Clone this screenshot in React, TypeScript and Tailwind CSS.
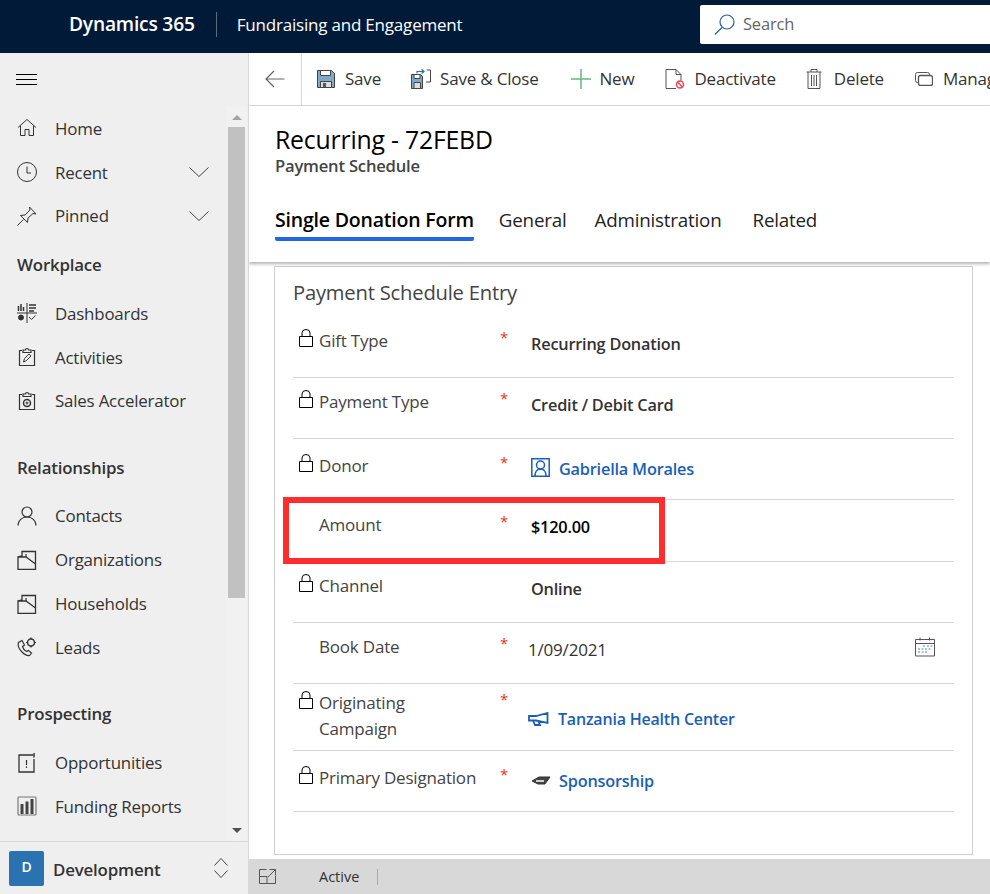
import React from "react";

const stroke = { fill: "none", stroke: "currentColor", strokeWidth: 1 };

const Ic = ({ children, className = "w-5 h-5" }: { children: React.ReactNode; className?: string }) => (
  <svg viewBox="0 0 20 20" className={className + " shrink-0"} {...stroke}>
    {children}
  </svg>
);

const navIcons: Record<string, React.ReactNode> = {
  home: <path d="M1 9.500 10 1.500l9 8M3.500 8v9.500h4.500v-6h4v6h4.500V8" />,
  clock: (
    <>
      <circle cx="10" cy="10" r="9.500" />
      <path d="M10 4.500V11h4" />
    </>
  ),
  pin: <path d="M.5 19.500 6.500 13.500M3.500 9.500l7 7 .5-4.500 5-4.500 3 .5-6.500-7 .5 3-5 5Z" />,
  dash: (
    <>
      <path d="M10 0v20M0 10h20" />
      <path d="M1.500 8V3M4 8V1M6.500 8V4M12 2h7M12 5h7M12 8h5" strokeWidth="1.500" />
      <circle cx="4" cy="14.500" r="2.500" fill="currentColor" />
      <path d="m12 14 2.500 2.500 4-4" />
    </>
  ),
  activity: (
    <>
      <path d="M5 3.500H2.500v15h15v-15H15M6 5.500V3h2.500a1.500 1.500 0 0 1 3 0H14v2.500Z" strokeWidth="1.200" />
      <path d="m6.500 15 1-3.500 4.500-4.500 2 2-4.500 4.500Z" />
    </>
  ),
  sales: (
    <>
      <path d="M5 3.500H2.500v15h15v-15H15M6 5.500V3h2.500a1.500 1.500 0 0 1 3 0H14v2.500Z" strokeWidth="1.200" />
      <circle cx="10" cy="12" r="3.500" strokeWidth="1.500" />
      <circle cx="10" cy="12" r="1" />
    </>
  ),
  contact: (
    <>
      <circle cx="10" cy="6" r="5" strokeWidth="1.200" />
      <path d="M1 19.500c0-5 4-8.500 9-8.500s9 3.500 9 8.500" strokeWidth="1.200" />
    </>
  ),
  org: (
    <>
      <path d="M1 19.500V7h8l9.500 7v5.500ZM1 7l4-1V1.500h13.500v12.500" strokeWidth="1.300" />
      <path d="M9 7V4" strokeWidth="1.200" />
    </>
  ),
  lead: (
    <>
      <path d="M5 3.500 1.500 5.500c-1 3 1 7 3.500 9.500s5 4 7.500 3.500l2-2.500-3-2.500-2 1c-2-1-3.500-3-4-5l2-1.500Z" strokeWidth="1.200" />
      <circle cx="14" cy="5.500" r="3.500" strokeWidth="1.500" />
      <path d="M14 .5v1.500M14 9v1.500M9 5.500h1.500M17.500 5.500H19" strokeWidth="1.200" />
    </>
  ),
  opp: (
    <>
      <path d="M16 2H2v17h15V6" strokeWidth="1.300" />
      <path d="M17 0v4.500" strokeWidth="1.500" />
      <path d="M9.500 7v5M9.500 13.500V15" strokeWidth="1.200" />
    </>
  ),
  report: (
    <>
      <rect x="1" y="1" width="18" height="18" rx="1" strokeWidth="1.200" stroke="#777" />
      <path d="M3.500 18V8h3v10ZM8.500 18V5.500h3V18ZM13.500 18V3h3v15Z" fill="#444" stroke="none" />
    </>
  ),
};

const NavRow = ({ icon, label, chevron }: { icon: string; label: string; chevron?: boolean }) => (
  <div className="h-[43.8px] flex items-center pl-[17px] text-[#333] shrink-0">
    <Ic>{navIcons[icon]}</Ic>
    <span className="ml-[18px] flex-1">{label}</span>
    {chevron && (
      <svg viewBox="0 0 20 10" className="w-[20px] h-[10px] mr-[17px] text-[#444]" {...stroke}>
        <path d="M.5.5 10 9.500 19.500.5" />
      </svg>
    )}
  </div>
);

const NavHeading = ({ label, className }: { label: string; className: string }) => (
  <div className={"pl-[17px] font-semibold text-[#333] leading-6 " + className}>{label}</div>
);

const Sidebar = () => (
  <aside className="w-[249px] shrink-0 bg-[#efefef] border-r border-[#d8d8d8] flex flex-col text-[16.900px] tracking-[-0.2px]">
    <div className="flex-1 min-h-0 flex overflow-hidden">
      <div className="flex-1 min-w-0 overflow-hidden">
        <div className="h-[53.600px] flex items-center pl-[16px]">
          <div className="w-[21px] flex flex-col gap-[4px]">
            <div className="h-px bg-black" />
            <div className="h-px bg-black" />
            <div className="h-px bg-black" />
          </div>
        </div>
        <NavRow icon="home" label="Home" />
        <NavRow icon="clock" label="Recent" chevron />
        <NavRow icon="pin" label="Pinned" chevron />
        <NavHeading label="Workplace" className="mt-[15px] mb-[14.500px]" />
        <NavRow icon="dash" label="Dashboards" />
        <NavRow icon="activity" label="Activities" />
        <NavRow icon="sales" label="Sales Accelerator" />
        <NavHeading label="Relationships" className="mt-[33px] mb-[14.300px]" />
        <NavRow icon="contact" label="Contacts" />
        <NavRow icon="org" label="Organizations" />
        <NavRow icon="org" label="Households" />
        <NavRow icon="lead" label="Leads" />
        <NavHeading label="Prospecting" className="mt-[32.700px] mb-[14.700px]" />
        <NavRow icon="opp" label="Opportunities" />
        <NavRow icon="report" label="Funding Reports" />
      </div>
      <div className="w-[21px] mr-px mt-[54px] flex flex-col items-center bg-[#f1f1f1]">
        <div className="h-[20px] flex items-center justify-center">
          <div className="border-x-[5px] border-x-transparent border-b-[5px] border-b-[#a3a3a3]" />
        </div>
        <div className="w-[17px] h-[471px] bg-[#c1c1c1]" />
        <div className="flex-1" />
        <div className="h-[20px] pb-[2px] flex items-center justify-center">
          <div className="border-x-[5px] border-x-transparent border-t-[5px] border-t-[#505050]" />
        </div>
      </div>
    </div>
    <div className="h-[53px] shrink-0 border-t border-[#d8d8d8] flex items-center pl-[9px]">
      <div className="w-[35px] h-[35px] rounded-[2px] bg-[#2a72b0] text-white text-[14px] font-semibold flex items-center justify-center pb-[3px]">
        D
      </div>
      <span className="ml-[9px] pt-[3px] flex-1 font-semibold text-[#333]">Development</span>
      <svg viewBox="0 0 14 20" className="w-[14px] h-[20px] mr-[20px] text-[#444]" {...stroke}>
        <path d="m.5 7.500 6.500-7 6.500 7M.5 12.500l6.500 7 6.500-7" />
      </svg>
    </div>
  </aside>
);

const ToolItem = ({ icon, label, className }: { icon: React.ReactNode; label: string; className: string }) => (
  <div className={"flex items-center shrink-0 " + className}>
    {icon}
    <span className="text-[#333] text-[17px] tracking-[-0.2px]">{label}</span>
  </div>
);

const Toolbar = () => (
  <div className="h-[53px] shrink-0 border-b border-[#d8d8d8] flex items-center overflow-hidden">
    <div className="w-[53px] h-full border-r border-[#d8d8d8] flex items-center justify-center shrink-0">
      <svg viewBox="0 0 20 20" className="w-[20px] h-[20px] text-[#666]" {...stroke}>
        <path d="M19.500 10H1M9 2l-8 8 8 8" strokeWidth="1.200" />
      </svg>
    </div>
    <ToolItem
      className="ml-[15px]"
      label="Save"
      icon={
        <svg viewBox="0 0 18 18" className="w-[18px] h-[18px] mr-[10px]">
          <path d="M.5.5h14l3 3v14H.5Z" fill="#7fa9cc" stroke="#444" />
          <path d="M3.500.5h10v5h-10Z" fill="#fff" stroke="#444" />
          <path d="M3.500 17.500v-6h11v6Z" fill="#ddd" stroke="#444" />
          <path d="M6 13h3v4H6Z" fill="#555" />
        </svg>
      }
    />
    <ToolItem
      className="ml-[30px]"
      label="Save & Close"
      icon={
        <svg viewBox="0 0 20 20" className="w-[20px] h-[20px] mr-[9px]">
          <path d="M.5 5.500h9l2 2v12H.5Z" fill="#7fa9cc" stroke="#444" />
          <path d="M3 5.500h6v4H3Z" fill="#fff" stroke="#444" />
          <path d="M3 19.500v-6h6.500v6Z" fill="#ddd" stroke="#444" />
          <path d="M6 4.500V2.500h7M10.500.5l2.500 2-2.500 2" fill="none" stroke="#2b6fb5" strokeWidth="1.200" />
          <path d="M16 1h3.500v12H15" fill="none" stroke="#444" />
        </svg>
      }
    />
    <ToolItem
      className="ml-[32px]"
      label="New"
      icon={
        <svg viewBox="0 0 20 20" className="w-[20px] h-[20px] mr-[9px]">
          <path d="M10 0v20M0 10h20" stroke="#64b87c" strokeWidth="1.500" fill="none" />
        </svg>
      }
    />
    <ToolItem
      className="ml-[31px]"
      label="Deactivate"
      icon={
        <svg viewBox="0 0 20 20" className="w-[20px] h-[20px] mr-[9px]">
          <path d="M11 19.500H1V.5h10l5 5v6M11 .5v5h5" fill="none" stroke="#555" />
          <circle cx="15" cy="15.500" r="3.500" fill="#fff" stroke="#e8485a" strokeWidth="1.500" />
          <path d="m12.500 13 5 5" stroke="#e8485a" strokeWidth="1.500" />
        </svg>
      }
    />
    <ToolItem
      className="ml-[30px]"
      label="Delete"
      icon={
        <svg viewBox="0 0 16 20" className="w-[16px] h-[20px] mr-[12px]" fill="none" stroke="#555">
          <path d="M.5 3h15M5 3V.5h6V3M2 3v16.500h12V3M5.500 6v11M8 6v11M10.500 6v11" />
        </svg>
      }
    />
    <ToolItem
      className="ml-[31px]"
      label="Manage"
      icon={
        <svg viewBox="0 0 18 14" className="w-[18px] h-[14px] mr-[10px]" fill="none" stroke="#555">
          <rect x=".5" y=".5" width="14" height="10" rx="2" />
          <rect x="3.500" y="3.500" width="14" height="10" rx="2" fill="#fff" strokeWidth="1.300" />
        </svg>
      }
    />
  </div>
);

const Lock = () => (
  <svg viewBox="0 0 14 18" className="w-[14px] h-[18px] shrink-0 text-black" {...stroke}>
    <path d="M.5 7.500h13v10H.5ZM3 7.500V4a4 3.500 0 0 1 8 0v3.500" />
  </svg>
);

const Row = ({
  label,
  label2,
  lock,
  required = true,
  h,
  labelPt,
  starPt,
  valueClass,
  children,
}: {
  label: string;
  label2?: string;
  lock?: boolean;
  required?: boolean;
  h: string;
  labelPt: string;
  starPt: string;
  valueClass: string;
  children: React.ReactNode;
}) => (
  <div className={"border-b border-[#d8d8d8] flex " + h}>
    <div className={"w-[207px] flex shrink-0 " + labelPt}>
      <div className="w-[26px] pl-[6px] pt-[1px] shrink-0">{lock && <Lock />}</div>
      <div className="text-[#444] text-[17px] tracking-[-0.2px] leading-[26px]">
        {label}
        {label2 && <div>{label2}</div>}
      </div>
    </div>
    <div className={"w-[31px] shrink-0 text-[#e8351f] text-[15px] leading-[24px] " + starPt}>{required ? "*" : ""}</div>
    <div className={"flex-1 flex items-start min-w-0 text-[16.300px] tracking-[-0.2px] " + valueClass}>{children}</div>
  </div>
);

const FormCard = () => (
  <div className="relative ml-[25px] mr-[17px] mt-[4px] mb-[4px] flex-1 min-h-0 border border-[#cfcfcf] px-[18px]">
    <div className="h-[49px] pt-[11px] text-[20.200px] leading-[28px] text-[#444] tracking-[-0.2px]">Payment Schedule Entry</div>
    <Row label="Gift Type" lock h="h-[62px]" labelPt="pt-[12px]" starPt="pt-[9px]" valueClass="pt-[13px] font-semibold text-[#333] leading-[30px]">
      Recurring Donation
    </Row>
    <Row label="Payment Type" lock h="h-[61px]" labelPt="pt-[11px]" starPt="pt-[8px]" valueClass="pt-[12px] font-semibold text-[#333] leading-[30px]">
      Credit / Debit Card
    </Row>
    <Row label="Donor" lock h="h-[61px]" labelPt="pt-[14px]" starPt="pt-[11px]" valueClass="pt-[15px] font-semibold text-[#1b5fb5] leading-[30px]">
      <svg viewBox="0 0 19 19" className="w-[19px] h-[19px] mr-[9px] mt-[4px] shrink-0" fill="none" stroke="#1b5fb5" strokeWidth="1.500">
        <path d="M.8.8h17.400v17.400H.8Z" />
        <circle cx="9.500" cy="7" r="4" />
        <path d="M4 18c0-4 2-7 5.500-7s5.500 3 5.500 7" />
      </svg>
      Gabriella Morales
    </Row>
    <Row label="Amount" h="h-[62px]" labelPt="pt-[12px]" starPt="pt-[9px]" valueClass="pt-[12px] font-semibold text-black leading-[30px]">
      $120.00
    </Row>
    <Row label="Channel" lock required={false} h="h-[61px]" labelPt="pt-[11px]" starPt="pt-[8px]" valueClass="pt-[12px] font-semibold text-[#333] leading-[30px]">
      Online
    </Row>
    <Row label="Book Date" h="h-[61px]" labelPt="pt-[11px]" starPt="pt-[8px]" valueClass="pt-[12px] pr-[19px] -ml-[3px] text-[#333] leading-[30px] justify-between !text-[17px]">
      1/09/2021
      <svg viewBox="0 0 20 20" className="w-[20px] h-[20px] mt-[2px]" fill="none" stroke="#555">
        <path d="M.5 2.500h19v16.500H.5ZM.5 6.500h19M5 .5v3M14.500.5v3" />
        <path d="M8 9h2M12 9h2M15.500 9h2M3 12h2M6.500 12h2M10 12h2M13.500 12h2M3 15h2M6.500 15h2M10 15h2" stroke="#5a87b0" />
      </svg>
    </Row>
    <Row label="Originating" label2="Campaign" lock h="h-[67px]" labelPt="pt-[6px]" starPt="pt-[3px]" valueClass="pt-[20px] -ml-[3px] font-semibold text-[#1b5fb5] leading-[30px] !text-[16px]">
      <svg viewBox="0 0 21 14" className="w-[21px] h-[14px] mr-[9px] mt-[8px] shrink-0" fill="none" stroke="#1b5fb5" strokeWidth="1.800">
        <path d="M1 4h7L19.500 1v10L8 8.500H1ZM5 8.500 7 13h5l-1.500-3.500" />
      </svg>
      Tanzania Health Center
    </Row>
    <Row label="Primary Designation" lock h="h-[61px]" labelPt="pt-[14px]" starPt="pt-[11px]" valueClass="pt-[15px] font-semibold text-[#1b5fb5] leading-[30px]">
      <svg viewBox="0 0 20 10" className="w-[20px] h-[10px] mr-[8px] mt-[10px] shrink-0" fill="#444" stroke="#333">
        <path d="M1 5 8 1h11l-5 7H7Z" />
        <path d="M5 5h8" stroke="#fff" strokeWidth="1.500" />
      </svg>
      Sponsorship
    </Row>
    {/* red annotation drawn over the Amount row */}
    <div className="absolute left-[8px] top-[230px] w-[382px] h-[67px] border-[6px] border-[#ff2d2d]" />
  </div>
);

const Main = () => (
  <main className="flex-1 min-w-0 flex flex-col bg-white overflow-hidden">
    <Toolbar />
    <div className="h-[156px] shrink-0 pl-[26px] shadow-[0_2px_3px_rgba(0,0,0,0.3)] z-10 relative bg-white">
      <div className="pt-[16px] text-[24.800px] leading-[34px] font-normal text-black tracking-[-0.2px]">Recurring - 72FEBD</div>
      <div className="text-[16.600px] leading-[20px] font-semibold text-[#444] tracking-[-0.2px]">Payment Schedule</div>
      <div className="flex mt-[30px] text-[18.800px] leading-[28px] text-[#222] tracking-[-0.2px]">
        <div className="font-semibold text-[19.500px] text-black border-b-[4px] border-[#2266e3] rounded-b-[2px] h-[35px]">Single Donation Form</div>
        <div className="ml-[25px]">General</div>
        <div className="ml-[28px]">Administration</div>
        <div className="ml-[31px]">Related</div>
      </div>
    </div>
    <FormCard />
    <div className="h-[35px] shrink-0 bg-[#d8d8d8] flex items-center text-[#333] text-[14.500px]">
      <svg viewBox="0 0 17 15" className="ml-[10px] w-[17px] h-[15px] text-[#555]" {...stroke}>
        <path d="M7.500.5H.5v14h16V7M.5 7.500h7.500v7M10.500.5h6v6M16.500.5 9 8" />
      </svg>
      <span className="ml-[43px]">Active</span>
      <div className="ml-[18px] w-px h-[16px] bg-[#aaa]" />
    </div>
  </main>
);

export default function App() {
  return (
    <div className="w-[990px] h-[894px] flex flex-col overflow-hidden font-['Open_Sans','Noto_Sans',sans-serif]">
      <header className="h-[53px] shrink-0 bg-[#001a38] flex items-center text-white overflow-hidden">
        <span className="ml-[69px] pb-[4px] text-[19.200px] font-semibold tracking-[-0.2px]">Dynamics 365</span>
        <div className="ml-[21px] mb-[4px] w-px h-[25px] bg-[#5b6b80]" />
        <span className="ml-[20px] pb-[3px] text-[17px] tracking-[-0.2px]">Fundraising and Engagement</span>
        <div className="ml-auto w-[290px] h-[39px] mb-[4px] bg-white rounded-l-[2px] flex items-center pl-[14px]">
          <svg viewBox="0 0 21 21" className="w-[21px] h-[21px] text-[#2b5f96]" {...stroke}>
            <circle cx="13" cy="8" r="7" strokeWidth="1.200" />
            <path d="M8 13.500.8 20.500" strokeWidth="1.200" />
          </svg>
          <span className="ml-[8px] text-[#666] text-[16.500px] tracking-[-0.2px]">Search</span>
        </div>
      </header>
      <div className="flex-1 min-h-0 flex">
        <Sidebar />
        <Main />
      </div>
    </div>
  );
}
